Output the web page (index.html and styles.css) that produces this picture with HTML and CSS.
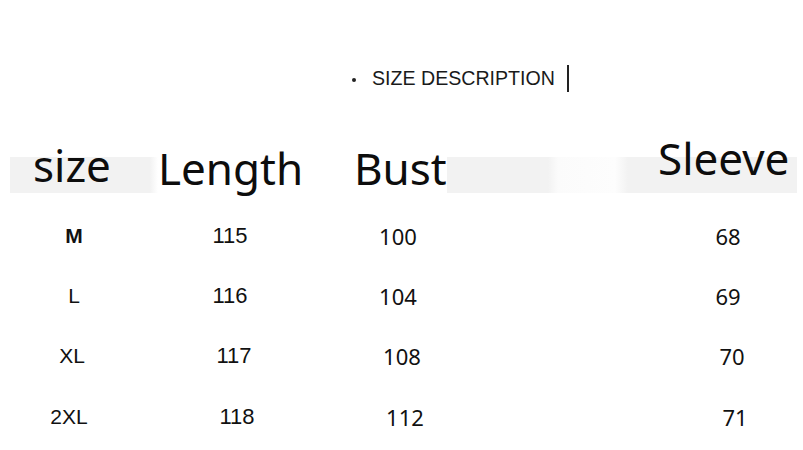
FILE: index.html
```html
<!DOCTYPE html>
<html lang="en">
<head>
<meta charset="utf-8">
<title>Size description</title>
<link rel="stylesheet" href="styles.css">
</head>
<body>
<main class="sheet">
  <header class="title">
    <span class="title__dot"></span>
    <span class="title__text">SIZE DESCRIPTION</span>
    <span class="title__bar"></span>
  </header>

  <div class="head">
    <div class="head__cell head__cell--size">size</div>
    <div class="head__cell head__cell--length">Length</div>
    <div class="head__cell head__cell--bust">Bust</div>
    <div class="head__cell head__cell--sleeve">Sleeve</div>
  </div>

  <div class="rows">
    <div class="row">
      <div class="cell cell--size cell--bold">M</div>
      <div class="cell cell--length num">115</div>
      <div class="cell cell--bust num">100</div>
      <div class="cell cell--sleeve num">68</div>
    </div>
    <div class="row">
      <div class="cell cell--size">L</div>
      <div class="cell cell--length num">116</div>
      <div class="cell cell--bust num">104</div>
      <div class="cell cell--sleeve num">69</div>
    </div>
    <div class="row row--xl">
      <div class="cell cell--size">XL</div>
      <div class="cell cell--length num">117</div>
      <div class="cell cell--bust num">108</div>
      <div class="cell cell--sleeve num">70</div>
    </div>
    <div class="row row--2xl">
      <div class="cell cell--size">2XL</div>
      <div class="cell cell--length num">118</div>
      <div class="cell cell--bust num">112</div>
      <div class="cell cell--sleeve num">71</div>
    </div>
  </div>
</main>
</body>
</html>
```

FILE: styles.css
```css
html, body {
  margin: 0;
  padding: 0;
  background: #ffffff;
}

body {
  width: 803px;
  height: 450px;
  overflow: hidden;
  color: #111111;
}

.sheet {
  display: flex;
  flex-direction: column;
}

/* ---------- title ---------- */
.title {
  display: flex;
  align-items: center;
  height: 28px;
  margin-top: 64px;
  padding-left: 352px;
  font-family: "Liberation Sans", Arial, sans-serif;
  font-size: 19.6px;
  line-height: 28px;
  color: #1a1a1a;
}

.title__dot {
  width: 4px;
  height: 4px;
  border-radius: 50%;
  background: #222222;
  margin-top: 3px;
}

.title__text {
  margin-left: 16px;
}

.title__bar {
  align-self: stretch;
  width: 2px;
  margin-left: 12px;
  background: #222222;
  margin-top: 1px;
}

/* ---------- header row ---------- */
.head {
  display: flex;
  align-items: flex-start;
  height: 60px;
  margin-top: 44px;
  padding-left: 33px;
  font-family: "Noto Sans", "Open Sans", sans-serif;
  font-size: 44px;
  line-height: 44px;
  color: #0d0d0d;
  background-image: linear-gradient(to right,
      #f2f2f2 0, #f2f2f2 140px,
      #ffffff 148px, #ffffff 437px,
      #f2f2f2 437px, #f2f2f2 538px,
      #fbfbfb 548px, #fdfdfd 605px,
      #f2f2f2 618px, #f2f2f2 100%);
  background-repeat: no-repeat;
  background-position: 10px 21px;
  background-size: 787px 36px;
}

.head__cell--size {
  width: 125px;
  padding-top: 7px;
}

.head__cell--length {
  width: 196px;
  padding-top: 10px;
}

.head__cell--bust {
  width: 304px;
  padding-top: 10px;
}

.head__cell--sleeve {
  padding-top: 0;
}

/* ---------- data rows ---------- */
.rows {
  display: flex;
  flex-direction: column;
  margin-top: 10px;
}

.row {
  display: grid;
  grid-template-columns: 88px 224px 112px 202px 144px;
  height: 60px;
  padding-left: 30px;
  line-height: 60px;
  font-family: "Liberation Sans", Arial, sans-serif;
  font-size: 21px;
  color: #111111;
}

.row--xl { height: 61px; }

.cell {
  text-align: center;
}

.cell--size { grid-column: 1; }
.cell--length {
  grid-column: 2;
  font-size: 22px;
}
.cell--bust {
  grid-column: 3;
  font-family: "Noto Sans", "Open Sans", sans-serif;
  font-size: 22px;
}
.cell--sleeve {
  grid-column: 5;
  font-family: "Noto Sans", "Open Sans", sans-serif;
  font-size: 22px;
}

.cell--bold {
  font-weight: 700;
  font-family: "Liberation Sans Narrow", "Liberation Sans", sans-serif;
  font-size: 21px;
}

.row--xl .num { padding-left: 8px; }
.row--xl .cell--size { padding-right: 4px; }

.row--2xl .num { padding-left: 14px; }
.row--2xl .cell--size { padding-right: 10px; }
```
